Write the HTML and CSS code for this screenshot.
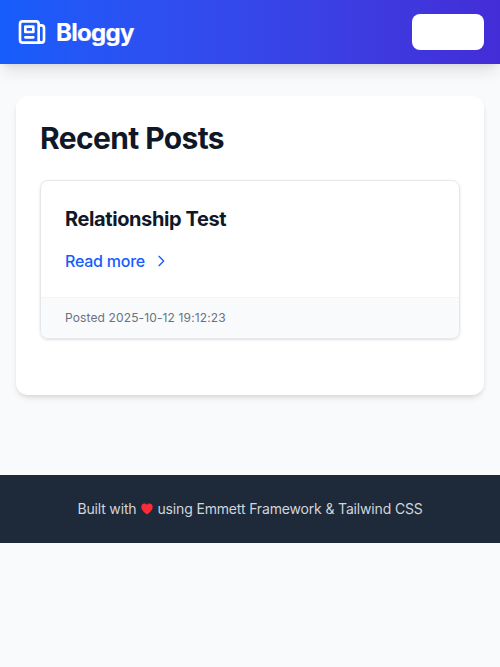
FILE: index.html
```html
<!DOCTYPE html>
<html lang="en">
<head>
<meta charset="utf-8">
<title>Bloggy</title>
<link rel="stylesheet" href="styles.css">
</head>
<body>
<header class="header">
  <a class="brand">
    <svg class="brand-icon" viewBox="0 0 24 24" fill="none" stroke="currentColor" stroke-width="2" stroke-linecap="round" stroke-linejoin="round"><path d="M19 20H5a2 2 0 01-2-2V6a2 2 0 012-2h10a2 2 0 012 2v1m2 13a2 2 0 01-2-2V7m2 13a2 2 0 002-2V9a2 2 0 00-2-2h-2m-4-3H9M7 16h6M7 8h6v4H7V8z"/></svg>
    <span>Bloggy</span>
  </a>
  <a class="nav-button"></a>
</header>
<main class="main">
  <section class="panel">
    <h1 class="title">Recent Posts</h1>
    <article class="post">
      <div class="post-body">
        <h2 class="post-title">Relationship Test</h2>
        <a class="more">Read more
          <svg class="chevron" viewBox="0 0 24 24" fill="none" stroke="currentColor" stroke-width="2" stroke-linecap="round" stroke-linejoin="round"><path d="M9 5l7 7-7 7"/></svg>
        </a>
      </div>
      <div class="post-meta">Posted 2025-10-12 19:12:23</div>
    </article>
  </section>
</main>
<footer class="footer">
  <p>Built with <svg class="heart" viewBox="0 0 12 12" fill="currentColor"><path d="M6 1.9C6.6.9 7.5.5 8.6.5c1.8 0 3.1 1.3 3.1 3.3 0 2.9-2.4 5.5-5.7 7.6C2.700 9.300.3 6.700.3 3.800.3 1.800 1.600.5 3.400.5c1.100 0 2 .4 2.600 1.400z"/></svg> using Emmett Framework &amp; Tailwind CSS</p>
</footer>
</body>
</html>
```
FILE: styles.css
```css
* { box-sizing: border-box; margin: 0; }
body { background: #f9fafb; color: #101828; font-family: Inter, "Liberation Sans", sans-serif; font-size: 16px; line-height: 24px; }
.header { display: flex; align-items: center; justify-content: space-between; height: 64px; padding: 0 16px; background: linear-gradient(to right in oklab, #155dfc, #432dd7); box-shadow: 0 10px 15px -3px rgba(0,0,0,.1), 0 4px 6px -4px rgba(0,0,0,.1); color: #fff; }
.brand { display: flex; align-items: center; gap: 8px; font-size: 24px; line-height: 32px; font-weight: 700; letter-spacing: -.7px; -webkit-text-stroke: .2px currentColor; }
.brand span { padding-top: 1px; }
.brand-icon { width: 32px; height: 32px; }
.nav-button { width: 72px; height: 36px; border-radius: 8px; background: #fff; }
.main { padding: 32px 16px; }
.panel { height: 299px; padding: 24px; background: #fff; border-radius: 12px; box-shadow: 0 4px 6px -1px rgba(0,0,0,.1), 0 2px 4px -2px rgba(0,0,0,.1); }
.title { font-size: 30px; line-height: 36px; font-weight: 700; letter-spacing: -.62px; margin-bottom: 24px; }
.post { border: 1px solid #e5e7eb; border-radius: 8px; overflow: hidden; box-shadow: 0 1px 3px rgba(0,0,0,.1), 0 1px 2px -1px rgba(0,0,0,.1); }
.post-body { padding: 24px; }
.post-title { font-size: 20px; line-height: 28px; font-weight: 700; letter-spacing: -.4px; margin-bottom: 16px; }
.more { display: flex; align-items: center; gap: 8px; color: #155dfc; font-weight: 500; letter-spacing: -.24px; }
.chevron { width: 16px; height: 16px; }
.post-meta { padding: 12px 24px; border-top: 1px solid #f3f4f6; background: #f9fafb; color: #6a7282; font-size: 12px; line-height: 16px; letter-spacing: .13px; }
.footer { margin-top: 48px; padding: 24px 16px; background: #1e2939; color: #d1d5dc; text-align: center; font-size: 14px; line-height: 20px; letter-spacing: -.16px; }
.heart { display: inline-block; width: 12px; height: 12px; margin: -2px .5px 0 1px; vertical-align: -1px; color: #fb2c36; }
```
